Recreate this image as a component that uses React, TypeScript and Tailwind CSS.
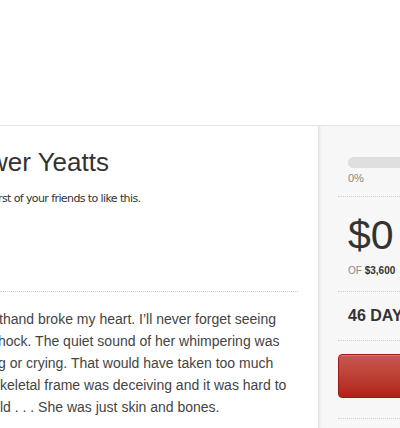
import React from "react";

export default function App() {
  const lines: { t: string; ml: number }[] = [
    { t: "thand broke my heart. I\u2019ll never forget seeing", ml: -1 },
    { t: "hock. The quiet sound of her whimpering was", ml: -2 },
    { t: "g or crying. That would have taken too much", ml: -2 },
    { t: "keletal frame was deceiving and it was hard to", ml: 0 },
    { t: "ld . . . She was just skin and bones.", ml: 0 },
  ];
  return (
    <div className="w-[400px] h-[428px] overflow-hidden bg-white font-['Liberation_Sans',Arial,sans-serif]">
      <div className="h-[126px] border-b border-[#e6e6e6]" />
      <div className="flex h-[302px]">
        <div className="w-[318px] shrink-0 pr-[20px] overflow-hidden">
          <div className="pt-[21px] text-[26px] leading-[31px] text-[#333] whitespace-nowrap ml-[-11px]">
            wer Yeatts
          </div>
          <div className="mt-[14px] text-[11px] leading-[14px] text-[#333] whitespace-nowrap ml-[-2px] font-['DejaVu_Sans',Tahoma,sans-serif] tracking-[-0.6px]">
            rst of your friends to like this.
          </div>
          <div className="mt-[85px] border-t border-dotted border-[#cfcfcf]" />
          <div className="pt-[16px] text-[14px] leading-[22px] text-[#444]">
            {lines.map((l, i) => (
              <div key={i} className="whitespace-nowrap" style={{ marginLeft: l.ml }}>
                {l.t}
              </div>
            ))}
          </div>
        </div>
        <div className="flex-1 bg-[#f7f7f7] border-l border-[#e2e2e2] shadow-[inset_3px_0_3px_-2px_rgba(0,0,0,0.06)] pl-[19px] overflow-hidden">
          <div className="w-[140px]">
            <div className="border-b border-dotted border-[#cfcfcf] pt-[31px] pb-[11px] px-[10px]">
              <div className="h-[11px] rounded-full bg-[#dedede]" />
              <div className="mt-[3px] text-[11px] leading-[14px] text-[#888]">0%</div>
            </div>
            <div className="border-b border-dotted border-[#cfcfcf] pt-[18px] pb-[14px] px-[10px]">
              <div className="text-[41px] leading-[40px] text-[#333] whitespace-nowrap">$0</div>
              <div className="mt-[10px] text-[10px] leading-[12px] text-[#888] whitespace-nowrap">
                OF <span className="font-bold text-[#333]">$3,600</span>
              </div>
            </div>
            <div className="border-b border-dotted border-[#cfcfcf] pt-[14px] pb-[14px] px-[10px]">
              <div className="text-[16px] leading-[20px] font-bold text-[#333] whitespace-nowrap">46 DAYS LEFT</div>
            </div>
            <div className="border-b border-dotted border-[#cfcfcf] pt-[13px] pb-[20px]">
              <div className="h-[44px] rounded-[4px] border border-[#9e1a13] bg-gradient-to-b from-[#c6584f] to-[#b21f17] shadow-[inset_0_1px_0_rgba(255,255,255,0.2)]" />
            </div>
          </div>
        </div>
      </div>
    </div>
  );
}
